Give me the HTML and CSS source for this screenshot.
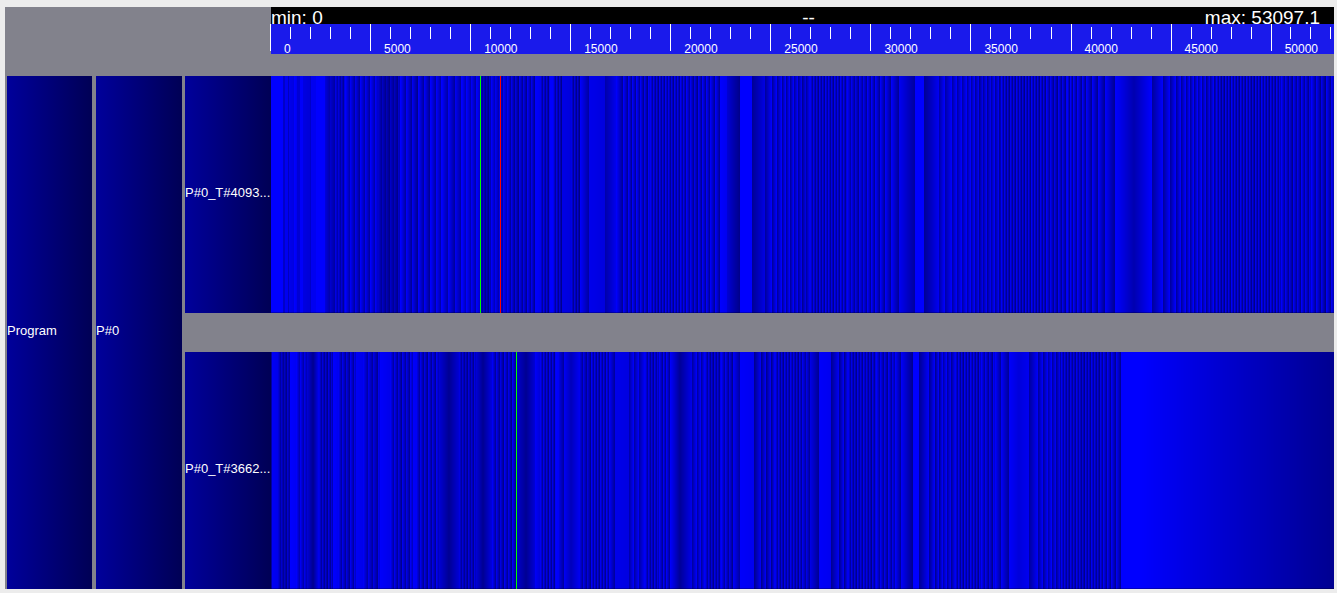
FILE: index.html
```html
<!DOCTYPE html>
<html lang="en">
<head>
<meta charset="utf-8">
<title>Trace timeline</title>
<link rel="stylesheet" href="styles.css">
</head>
<body>
<main class="viewer">
  <header class="scale">
    <div class="range">
      <span>min: 0</span>
      <span class="range-mid">--</span>
      <span class="range-max">max: 53097.1</span>
    </div>
    <div class="ruler" id="ruler"></div>
  </header>
  <div class="node program">Program</div>
  <div class="node process">P#0</div>
  <div class="node thread-a">P#0_T#4093...</div>
  <canvas class="track thread-a" id="track-a" width="1063" height="237" role="img" aria-label="Events of P#0_T#4093"></canvas>
  <div class="node thread-b">P#0_T#3662...</div>
  <canvas class="track thread-b" id="track-b" width="1063" height="237" role="img" aria-label="Events of P#0_T#3662"></canvas>
</main>
<script src="timeline.js"></script>
</body>
</html>
```
FILE: styles.css
```css
* {
  box-sizing: border-box;
}

body {
  margin: 0;
  background: #ececec;
  color: #fff;
  font-family: "Liberation Sans", Arial, sans-serif;
  font-size: 12px;
}

.viewer {
  display: grid;
  grid-template-columns: 89px 89px 86px minmax(0, 1fr);
  grid-template-rows: 69px minmax(0, 1fr) 39px minmax(0, 1fr);
  height: calc(100vh - 11px);
  min-height: 300px;
  margin: 7px 3px 4px 5px;
  padding-left: 2px;
  background: #82828c;
}

.scale {
  grid-column: 4;
  min-width: 0;
}

.range {
  display: grid;
  grid-template-columns: 1fr auto 1fr;
  height: 17px;
  overflow: hidden;
  background: #000;
  font-size: 19px;
  line-height: 21px;
}

.range-mid {
  padding-left: 12px;
}

.range-max {
  padding-right: 14px;
  text-align: right;
}

.ruler {
  display: flex;
  height: 30px;
  background: #1a1aeb;
}

.major {
  display: grid;
  grid-template-rows: 15px 12px;
  min-width: 0;
  height: 27px;
  margin: 0 1px 0 -1px;
  border-left: 1px solid #fff;
}

.minors {
  display: flex;
  padding-top: 3px;
}

.minor {
  min-width: 0;
  border-left: 1px solid #fff;
}

.minor:first-child {
  border-left: 0;
}

.tick-label {
  padding: 3px 0 0 13px;
  line-height: 14px;
  white-space: nowrap;
}

.node {
  display: flex;
  align-items: center;
  padding-bottom: 4px;
  overflow: hidden;
  background: linear-gradient(to right, #00009b, #000055);
  font-size: 13px;
  white-space: nowrap;
}

.program,
.process {
  grid-row: 2 / 5;
}

.program {
  grid-column: 1;
  margin-right: 4px;
}

.process {
  grid-column: 2;
  margin-right: 3px;
}

.node.thread-a,
.node.thread-b {
  grid-column: 3;
}

.thread-a {
  grid-row: 2;
}

.thread-b {
  grid-row: 4;
}

.track {
  display: block;
  grid-column: 4;
  width: 100%;
  height: 100%;
}
```
FILE: timeline.js
```js
const MAX_TIME = 53097.1;
const ruler = document.getElementById('ruler');

for (let start = 0; start < MAX_TIME; start += 5000) {
  const end = Math.min(start + 5000, MAX_TIME);
  const major = document.createElement('div');
  major.className = 'major';
  major.style.flex = `${end - start} 1 0`;
  const minors = document.createElement('div');
  minors.className = 'minors';
  for (let t = start; t < end; t += 1000) {
    const minor = document.createElement('span');
    minor.className = 'minor';
    minor.style.flex = `${Math.min(1000, end - t)} 1 0`;
    minors.append(minor);
  }
  const label = document.createElement('span');
  label.className = 'tick-label';
  label.textContent = start;
  major.append(minors, label);
  ruler.append(major);
}

// Each run: [offset, first level, last level, repeat period (optional)].
const saw = (edges, from, to) => edges.map(x => [x, from, to]);

const runsA = [
  [0,255,255],[12,200,200],[14,240,240],[17,190,190],[18,235,225],[23,255,240],
  [26,210,210],[29,250,250],[32,225,215],[39,200,190],[40,240,240],[45,255,255],
  [54,205,165,5],[64,220,165,3],[74,245,165,5],[107,195,145,4],[129,250,155,6],
  [170,250,160,7],[190,255,180,5],[209,200,150,3],[220,240,180,4],[236,235,150,4],
  [264,255,240],[269,230,150,3],[279,255,255],[282,230,150,3],[291,230,220],
  [300,220,140,3],[309,250,165],[318,235,222],[334,170,235],
  ...saw([345,352,357,361], 250, 155),[365,245,150,4],[379,235,150,3],[415,240,150,4],
  ...saw([431,435,439,444], 250, 155),[449,255,240],[456,210,140],[469,255,255],
  [481,150,225],...saw([494,501,506,511,515,519], 160, 250),[523,160,235,4],
  [539,235,150,3],[576,240,160,4],...saw([596,600,604,609,614,620], 250, 155),
  [628,240,160],[644,255,255],[653,150,240],
  ...saw([668,674,681,686,691,696], 170, 250),[700,160,240,4],[730,235,145,3],[775,240,150,4],
  ...saw([796,799,802,806,811,815,821,827,834], 250, 150),[844,255,178],[863,178,255],
  ...saw([881,892,899,905,910,915,919,923], 160, 250),[927,160,245,4],[945,235,145,3],
  [1010,240,150,4],[1040,245,145,5]
];

const runsB = [
  [0,160,160],[1,245,235],[7,205,150,3],[19,255,245],[25,240,170,4],[36,210,150],
  [42,150,235],[48,220,150,3],[62,255,240],[67,235,155,4],[85,245,235],[92,235,160,5],
  [109,250,235],[119,235,155,4],[142,250,245],[145,235,150,4],[168,210,150],
  [178,150,210],[188,215,150,3],[205,210,150],[212,150,220],[221,235,150,4],
  [246,200,150],[255,150,210],[264,245,220],[269,235,150,3],[285,255,245],[288,220,160],
  [293,240,190],[300,190,235],[308,230,150,4],[320,235,150,3],[338,245,160],
  [344,235,225],...saw([358,363,368], 170, 245),[374,230,155,3],
  ...saw([388,392,395], 245, 155),[399,250,155],[409,155,230],
  ...saw([421,426,430], 165, 245),[434,225,150,3],[450,240,155,4],[462,245,165],
  [469,250,240],...saw([483,490,495,500], 145, 240),[504,230,150,3],[531,230,155,4],
  [539,230,150],[548,250,240],...saw([560,568,573], 150, 240),[577,230,150,3],
  [605,240,155,4],[624,250,155],[630,245,145],[642,255,255],
  ...saw([648,658,664,668], 150, 245),[672,165,240,4],[684,235,150,3],[710,240,155,4],
  [724,250,160],[730,245,155],[738,250,220],[748,220,240],
  ...saw([758,767,772], 160, 245),[777,165,240,4],[790,230,150,3],
  ...saw([832,836,840,845], 245, 150),[850,255,255],[868,255,145]
];

function drawTrack(id, runs, markers) {
  const canvas = document.getElementById(id);
  const ctx = canvas.getContext('2d');
  runs.forEach(([x, from, to, period], i) => {
    const end = i + 1 < runs.length ? runs[i + 1][0] : canvas.width;
    const length = period || end - x;
    for (let px = x; px < end; px++) {
      const cycle = Math.floor((px - x) / length);
      const step = (px - x) % length;
      const dim = period ? (cycle * 7 % 5) * 5 - 10 : 0;
      const level = from + (to - from) * step / Math.max(1, length - 1) - dim;
      ctx.fillStyle = `rgb(0, 0, ${Math.round(level)})`;
      ctx.fillRect(px, 0, 1, canvas.height);
    }
  });
  ctx.fillStyle = 'rgba(0, 0, 0, 0.25)';
  ctx.fillRect(0, canvas.height - 1, canvas.width, 1);
  for (const [x, color] of markers) {
    ctx.fillStyle = color;
    ctx.fillRect(x, 0, 1, canvas.height);
  }
}

drawTrack('track-a', runsA, [[209, '#00ff00'], [229, '#ff0000']]);
drawTrack('track-b', runsB, [[245, '#00ff00']]);
```
